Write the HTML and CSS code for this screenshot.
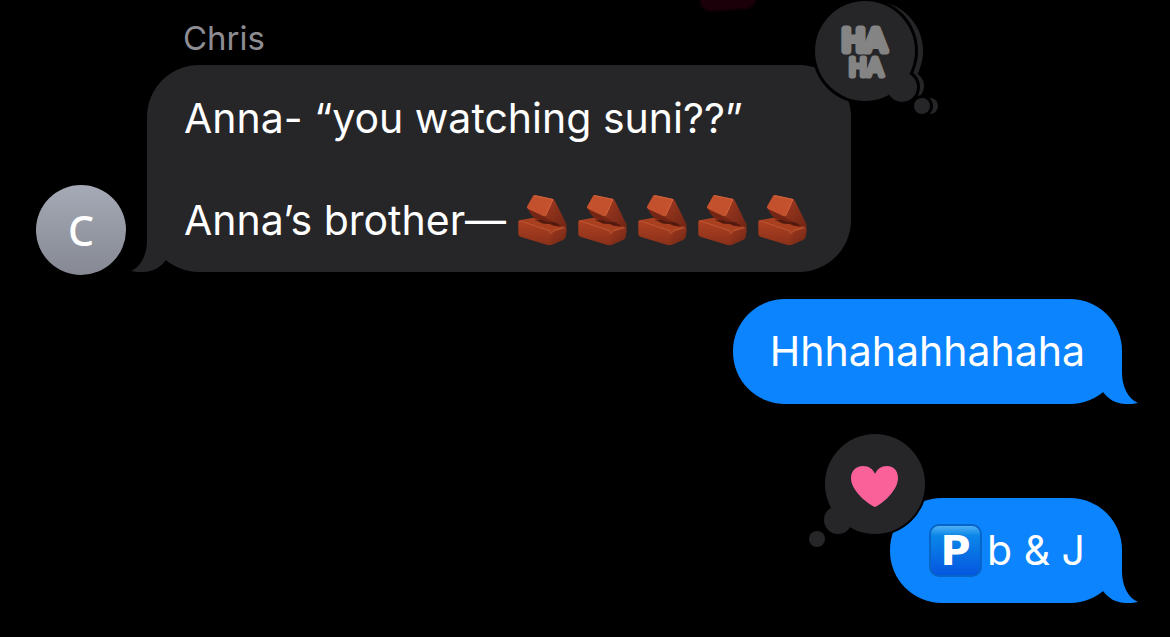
FILE: index.html
```
<!doctype html>
<html lang="en">
<head>
<meta charset="UTF-8">
<title>Messages</title>
<link rel="stylesheet" href="styles.css">
</head>
<body>
<svg class="defs" width="0" height="0" aria-hidden="true">
	<defs>
		<linearGradient id="front" x1="0" y1="0" x2="0" y2="1">
			<stop offset="0" stop-color="#ae4122"/>
			<stop offset="1" stop-color="#893019"/>
		</linearGradient>
		<linearGradient id="side" x1="0" y1="0" x2="1" y2="1">
			<stop offset="0" stop-color="#a03a20"/>
			<stop offset="1" stop-color="#702514"/>
		</linearGradient>
		<symbol id="brick" viewBox="0 12 180 153">
			<path d="M13 91Q14 86 24 86L58 80L100 90L156 108L154 116L108 128Z" fill="#a8401f"/>
			<path d="M40 50L94 68L150 105L134 108L112 98L62 82Q48 70 40 50Z" fill="#742513"/>
			<path d="M62 86L82 86L100 92L122 94L142 103L122 105L106 99L88 98Z" fill="#541a10"/>
			<path d="M116 23Q120 24 123 30L158 101Q160 106 154 109L132 98L92 78Z" fill="url(#side)"/>
			<path d="M57 15Q59 11 66 13L114 23Q119 25 116 31L97 72Q94 78 87 75L44 55Q36 51 40 45Z" fill="#c4512d"/>
			<path d="M61 14L117 25L95 74" fill="none" stroke="#d96e46" stroke-width="2"/>
			<path d="M108 125L154 109Q159 109 158 116L155 138Q154 144 147 147L113 162Q105 164 104 157Z" fill="url(#side)"/>
			<path d="M13 93Q13 88 20 90L104 118Q110 121 110 128L108 158Q107 164 100 162L19 137Q14 135 13 130Z" fill="url(#front)"/>
			<path d="M17 89L106 119L110 128L122 118L152 110" fill="none" stroke="#c7623c" stroke-width="2"/>
		</symbol>
		<symbol id="tail" viewBox="0 0 42 54">
			<path d="M24 0V23C24 36 30 49 40 53C36 54 32 54 28 54C18 54 10 49 5 42L0 30Z"/>
		</symbol>
	</defs>
</svg>
<div class="smudge"></div>
<main class="chat">
	<div class="name">Chris</div>
	<div class="row incoming">
		<div class="avatar">C</div>
		<div class="bubble">
			<svg class="tail" aria-hidden="true"><use href="#tail"/></svg>
			<p>Anna- “you watching suni??”</p>
			<p class="blank"></p>
			<p>Anna’s brother—<span class="bricks" role="img" aria-label="bricks"><svg><use href="#brick"/></svg><svg><use href="#brick"/></svg><svg><use href="#brick"/></svg><svg><use href="#brick"/></svg><svg><use href="#brick"/></svg></span></p>
			<svg class="tapback haha" viewBox="0 0 135 120">
				<g class="back">
					<circle cx="63" cy="51" r="50"/>
					<circle cx="100" cy="86" r="14"/>
					<circle cx="120" cy="106" r="8"/>
				</g>
				<g class="outline">
					<circle cx="55" cy="51" r="53"/>
					<circle cx="92" cy="87" r="18"/>
					<circle cx="112" cy="106" r="11"/>
				</g>
				<g class="front">
					<circle cx="55" cy="51" r="50"/>
					<circle cx="92" cy="87" r="15"/>
					<circle cx="112" cy="106" r="8"/>
				</g>
				<text class="ha" x="54" y="51" text-anchor="middle">HA</text>
				<text class="ha small" x="56" y="76" text-anchor="middle">HA</text>
			</svg>
		</div>
	</div>
	<div class="row outgoing">
		<div class="bubble">
			<svg class="tail" aria-hidden="true"><use href="#tail"/></svg>
			<p>Hhhahahhahaha</p>
		</div>
	</div>
	<div class="row outgoing reacted">
		<div class="bubble">
			<svg class="tail" aria-hidden="true"><use href="#tail"/></svg>
			<p><span class="parking">P</span>b &amp; J</p>
			<svg class="tapback love" viewBox="0 0 120 120">
				<g class="outline">
					<circle cx="66" cy="54" r="52"/>
					<circle cx="29" cy="90" r="16"/>
				</g>
				<g class="front">
					<circle cx="66" cy="54" r="50"/>
					<circle cx="29" cy="90" r="14"/>
					<circle cx="8" cy="109" r="8"/>
				</g>
				<path class="heart" d="M66 77C64 77 42 63 42 48C42 40 48 36 54 36C60 36 64 39 66 44C68 39 72 36 78 36C84 36 89 40 89 48C89 63 68 77 66 77Z"/>
			</svg>
		</div>
	</div>
</main>
</body>
</html>
```
FILE: styles.css
```
*{margin:0;padding:0;box-sizing:border-box;}
body{background:#000;color:#fff;font-family:Inter,"Liberation Sans",sans-serif;font-size:41px;line-height:51px;overflow-x:hidden;}
.defs{position:absolute;}
.smudge{position:absolute;left:700px;top:-10px;width:56px;height:20px;border-radius:10px;background:#1c0009;transform:rotate(-4deg);filter:blur(1px);}
.chat{padding:18px 48px 32px 36px;}
.name{margin:0 0 7px 147px;color:#8d8d93;font-size:33px;line-height:40px;}
.row{display:flex;align-items:flex-end;}
.outgoing{justify-content:flex-end;margin-top:27px;}
.reacted{margin-top:94px;}
.avatar{flex:none;width:90px;height:90px;margin:0 21px -3px 0;border-radius:50%;background:linear-gradient(#a5aab6,#868993);font-family:"Noto Sans",sans-serif;font-weight:500;line-height:90px;text-align:center;}
.bubble{position:relative;padding:27px 37px;border-radius:52px;background:#0b84fe;}
.incoming .bubble{padding-top:28px;padding-bottom:26px;background:#262629;}
.bubble p{position:relative;z-index:1;min-height:51px;}
.tail{position:absolute;right:-18px;bottom:0;width:42px;height:54px;fill:#0b84fe;}
.incoming .tail{right:auto;left:-18px;fill:#262629;transform:scaleX(-1);}
.bricks{display:inline-flex;height:51px;margin-left:8px;vertical-align:top;}
.bricks svg{width:60px;height:51px;}
.parking{display:inline-block;width:53px;height:53px;margin:-1px 5px -1px 2px;border:2px solid #0865c8;border-radius:10px;background:linear-gradient(#4fb0f5,#0a86e8 20%,#0557e0);font-family:"DejaVu Sans",sans-serif;font-size:41px;font-weight:bold;line-height:51px;text-align:center;vertical-align:top;}
.tapback{position:absolute;z-index:2;overflow:visible;}
.haha{top:-65px;right:-94px;width:135px;height:120px;}
.love{top:-68px;left:-81px;width:120px;height:120px;}
.back,.front{fill:#262629;}
.outline{fill:#000;}
.ha{fill:#848484;stroke:#848484;stroke-width:7;stroke-linejoin:round;stroke-linecap:round;font-family:"DejaVu Sans",sans-serif;font-size:31px;}
.small{stroke-width:5;font-size:24px;}
.heart{fill:#fb6199;}
```
